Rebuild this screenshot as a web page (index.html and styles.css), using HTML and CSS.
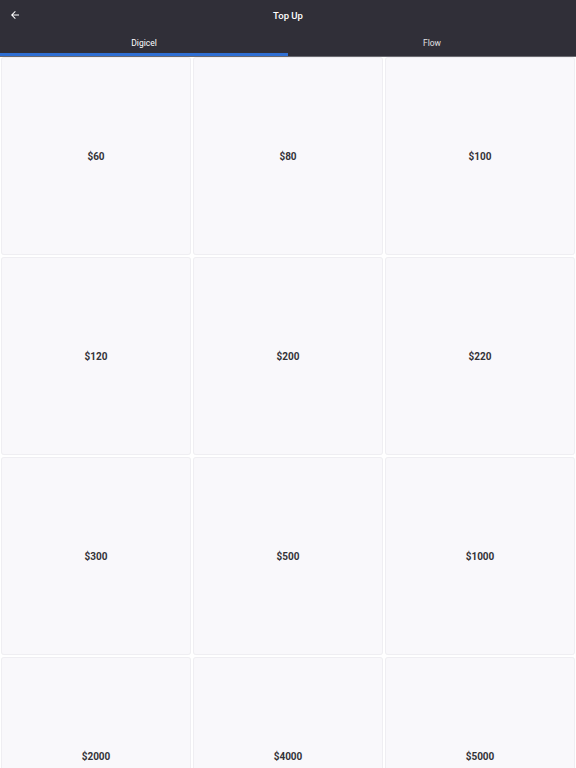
FILE: index.html
```html
<!DOCTYPE html>
<html>
<head>
<meta charset="utf-8">
<link rel="stylesheet" href="styles.css">
</head>
<body>
<header class="appbar">
  <div class="toolbar">
    <button class="back" aria-label="Back">
      <svg width="12" height="12" viewBox="0 0 24 24"><path d="M20 11H7.83l5.59-5.59L12 4l-8 8 8 8 1.41-1.41L7.83 13H20v-2z" fill="#ffffff"/></svg>
    </button>
    <div class="title">Top Up</div>
  </div>
  <nav class="tabs">
    <div class="tab active">Digicel</div>
    <div class="tab">Flow</div>
  </nav>
</header>
<main class="grid">
  <div class="card">$60</div>
  <div class="card">$80</div>
  <div class="card">$100</div>
  <div class="card">$120</div>
  <div class="card">$200</div>
  <div class="card">$220</div>
  <div class="card">$300</div>
  <div class="card">$500</div>
  <div class="card">$1000</div>
  <div class="card">$2000</div>
  <div class="card">$4000</div>
  <div class="card">$5000</div>
</main>
</body>
</html>
```
FILE: styles.css
```css
html, body {
  margin: 0;
  padding: 0;
  background: #ffffff;
  font-family: Roboto, "Liberation Sans", Arial, sans-serif;
  overflow: hidden;
}
.appbar {
  background: #302f38;
  color: #ffffff;
}
.toolbar {
  height: 30px;
  display: flex;
  align-items: center;
  justify-content: center;
  position: relative;
}
.back {
  position: absolute;
  left: 9px;
  top: 9px;
  width: 12px;
  height: 12px;
  padding: 0;
  border: 0;
  background: none;
  display: flex;
}
.title {
  font-size: 9.5px;
  font-weight: 500;
  margin-top: 1px;
}
.tabs {
  display: flex;
  height: 26px;
  border-bottom: 1px solid #6a6a70;
}
.tab {
  flex: 1;
  display: flex;
  align-items: center;
  justify-content: center;
  font-size: 8.5px;
  color: #e0e0e4;
  border-bottom: 3px solid transparent;
  box-sizing: border-box;
  padding-top: 2px;
}
.tab.active {
  border-bottom-color: #2f6fd3;
  color: #ffffff;
}
.grid {
  display: grid;
  grid-template-columns: repeat(3, 188px);
  grid-auto-rows: 196px;
  gap: 4px;
  padding: 1px 2px 2px;
}
.card {
  background: #f9f8fb;
  border-radius: 2px;
  box-shadow: 0 0 0 1px #efeef2, 0 1px 1px rgba(0,0,0,0.04);
  display: flex;
  align-items: center;
  justify-content: center;
  font-size: 10px;
  font-weight: 700;
  color: #333338;
}
```
